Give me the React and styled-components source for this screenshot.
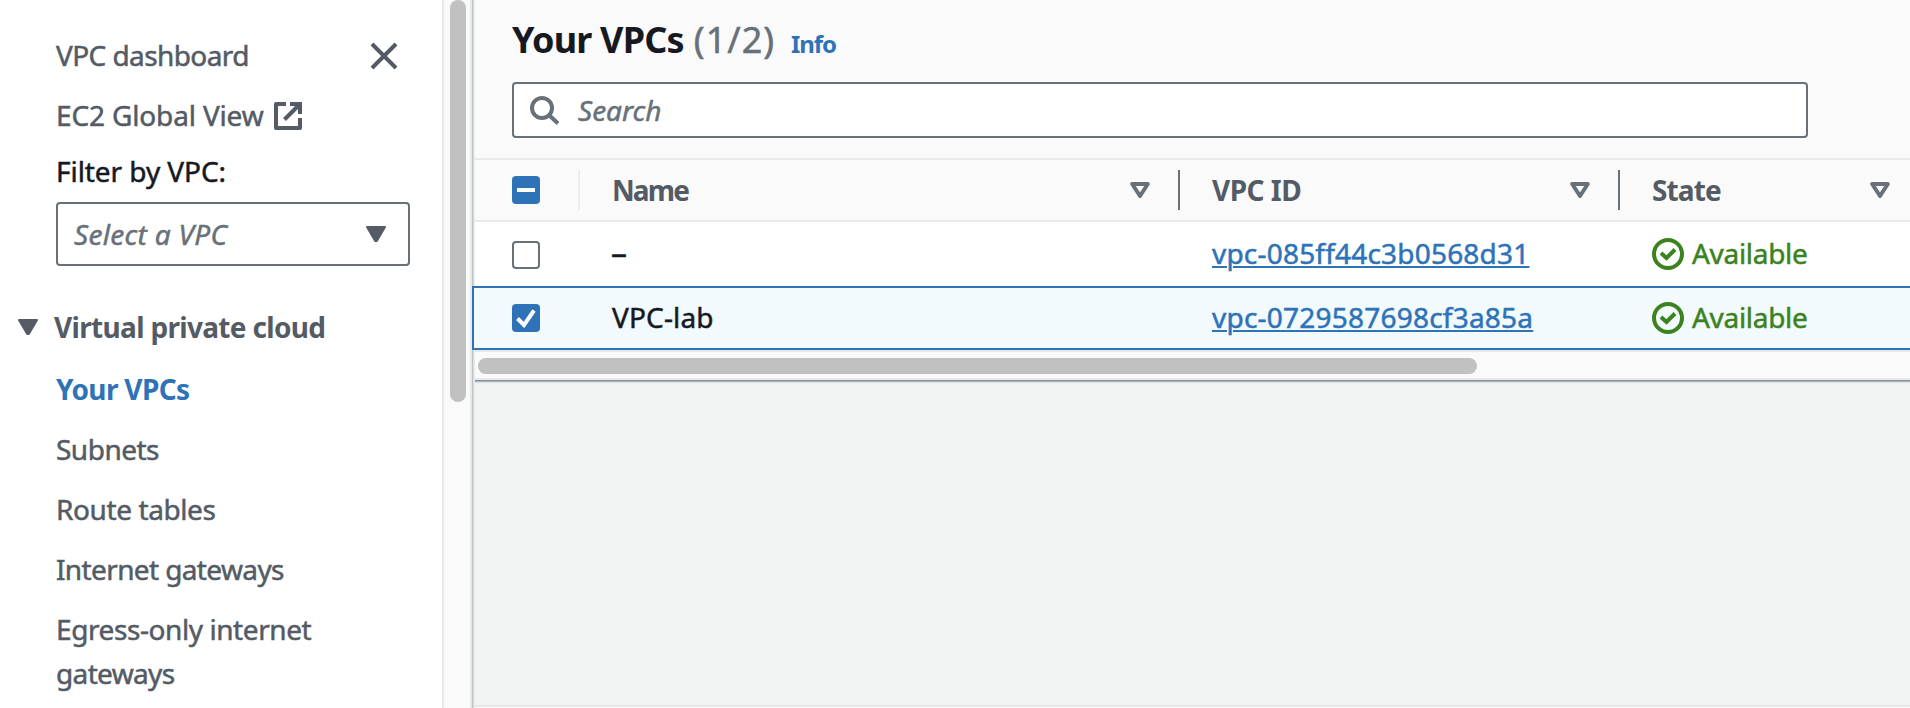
import React from "react";
import styled, { createGlobalStyle } from "styled-components";

const GlobalStyle = createGlobalStyle`
  *, *::before, *::after { box-sizing: border-box; }
  body {
    margin: 0;
    overflow: hidden;
    background: #f2f3f3;
    color: #16191f;
    font: 28px/44px "Noto Sans", "Open Sans", sans-serif;
    -webkit-text-stroke: 0.5px currentColor;
  }
  svg { display: block; flex: none; }
`;

const Page = styled.div`
  display: flex;
  width: 100vw;
  height: 100vh;
  overflow: hidden;
`;

/* Sidebar */
const Sidebar = styled.aside`
  flex: none;
  display: flex;
  width: 472px;
  background: #fff;
`;

const SidebarContent = styled.div`
  flex: 1;
  padding: 33px 32px 0 0;
  overflow: hidden;
`;

const ScrollTrack = styled.div`
  flex: none;
  width: 30px;
  padding-left: 6px;
  background: #fafafa;
  border: solid #e8e8e8;
  border-width: 0 2px;
`;

const ScrollThumb = styled.div`
  width: 16px;
  height: 402px;
  border-radius: 8px;
  background: #c1c1c1;
`;

const Track = styled.span`
  letter-spacing: ${(p) => p.$ls || 0}px;
`;

const NavHeader = styled.div`
  display: flex;
  align-items: center;
  justify-content: space-between;
  height: 44px;
  padding: 0 12px 0 56px;
  color: #545b64;

  svg { margin-top: 2px; }
`;

const NavLink = styled.a`
  display: flex;
  align-items: center;
  gap: 10px;
  margin: 16px 0 0 56px;
  color: ${(p) => (p.$active ? "#2e73b8" : "#545b64")};
  font-weight: ${(p) => (p.$active ? 700 : 400)};
  -webkit-text-stroke-width: ${(p) => (p.$active ? 0 : 0.5)}px;

  svg { margin-top: 2px; }
`;

const FilterLabel = styled.div`
  margin: 12px 0 0 56px;
  height: 44px;
`;

const Select = styled.div`
  display: flex;
  align-items: center;
  justify-content: space-between;
  width: 354px;
  height: 64px;
  margin: 9px 0 0 56px;
  padding: 0 22px 0 16px;
  border: 2px solid #687078;
  border-radius: 4px;
  color: #687078;
  font-style: italic;
`;

const SectionTitle = styled.div`
  display: flex;
  align-items: center;
  gap: 16px;
  margin: 39px 0 18px;
  padding-left: 18px;
  height: 44px;
  color: #545b64;
  font-weight: 700;
  -webkit-text-stroke-width: 0;
`;

/* Main panel */
const Main = styled.main`
  position: relative;
  flex: 1;
  min-width: 0;
  display: flex;
  flex-direction: column;
  overflow: hidden;
  background: #f2f3f3;
`;

const EdgeShadow = styled.div`
  position: absolute;
  left: 0;
  top: ${(p) => p.$top}px;
  bottom: ${(p) => p.$bottom};
  width: 4px;
  background: linear-gradient(90deg, #bcc3c8 0 1px, #dadee1 1px 2px, #e9eced 2px 3px, transparent 3px);
`;

const Panel = styled.section`
  flex: none;
  background: #fafafa;
`;

const PanelHeader = styled.header`
  height: 158px;
  padding: 17px 0 0 40px;
`;

const TitleRow = styled.div`
  display: flex;
  align-items: baseline;
  height: 46px;
  line-height: 46px;
`;

const Title = styled.h1`
  margin: 0;
  font-size: 36px;
  font-weight: 700;
  letter-spacing: -0.8px;
  -webkit-text-stroke-width: 0;
`;

const Count = styled.span`
  margin-left: 10px;
  color: #687078;
  font-size: 36px;
  letter-spacing: 1px;
`;

const Info = styled.a`
  margin-left: 16px;
  color: #2e73b8;
  font-size: 24px;
  font-weight: 700;
  letter-spacing: -1.1px;
  -webkit-text-stroke-width: 0;
`;

const SearchBox = styled.div`
  display: flex;
  align-items: center;
  gap: 18px;
  width: 1296px;
  height: 56px;
  margin-top: 19px;
  padding: 0 16px;
  border: 2px solid #687078;
  border-radius: 4px;
  background: #fff;
  color: #687078;
  font-style: italic;

  svg { margin-top: 2px; }
`;

const Grid = styled.div`
  display: grid;
  grid-template-columns: 108px 600px 440px 300px;
  height: 64px;
`;

const HeaderRow = styled(Grid)`
  border: solid #eaeaea;
  border-width: 2px 0;
  color: #545b64;
  font-weight: 700;
  -webkit-text-stroke-width: 0;
`;

const HeaderCell = styled.div`
  display: flex;
  align-items: center;
  justify-content: space-between;
  height: 40px;
  margin: 10px 0;
  padding: 0 28px 0 32px;
  border-right: 2px solid #687078;
`;

const CheckHeader = styled(HeaderCell)`
  padding: 0 0 0 40px;
  border-right-color: #eaeded;
`;

const Row = styled(Grid)`
  background: #fff;
`;

const SelectedRow = styled(Grid)`
  grid-template-columns: 106px 600px 440px 300px;
  border: 2px solid #2e73b8;
  border-right: 0;
  background: #f2fafe;
`;

const Cell = styled.div`
  display: flex;
  align-items: center;
  gap: 8px;
  padding: 0 0 2px 32px;
  color: ${(p) => (p.$success ? "#3c821f" : "#16191f")};

  svg { margin-top: 2px; }
`;

const Dash = styled.span`
  margin-left: -1px;
  font-size: 32px;
`;

const CheckCell = styled.div`
  display: flex;
  align-items: center;
  padding: ${(p) => (p.$selected ? "0 0 0 38px" : "2px 0 0 40px")};
`;

const Link = styled.a`
  color: #2e73b8;
  text-decoration: underline;
  text-decoration-thickness: 2px;
  text-underline-offset: 2px;
  letter-spacing: ${(p) => p.$ls}px;
`;

const Box = styled.span`
  display: flex;
  align-items: center;
  justify-content: center;
  width: 28px;
  height: 28px;
  border-radius: 4px;
  border: 2px solid ${(p) => (p.$on ? "#2e73b8" : "#687078")};
  background: ${(p) => (p.$on ? "#2e73b8" : "#fff")};
`;

const HScroll = styled.div`
  height: 30px;
  padding: 6px 0 0 6px;
  border: solid #e8e8ea;
  border-width: 2px 0;
`;

const HThumb = styled.div`
  width: 999px;
  height: 16px;
  border-radius: 8px;
  background: #c1c1c1;
`;

const PanelShadow = styled.div`
  flex: none;
  height: 4px;
  background: linear-gradient(#879196 0 1px, #aab3b7 1px 2px, #e1e4e5 2px 3px, #eff1f1 3px);
`;

const BottomEdge = styled.div`
  height: 3px;
  margin-top: auto;
  border-top: 2px solid #e5e6e6;
  background: #fff;
`;

const CloseIcon = () => (
  <svg width="28" height="28" viewBox="0 0 28 28" fill="none" stroke="#545b64" strokeWidth="4">
    <path d="M2 2l24 24M26 2L2 26" />
  </svg>
);

const ExternalIcon = () => (
  <svg width="28" height="28" viewBox="0 0 28 28" fill="none" stroke="#545b64" strokeWidth="4" strokeLinejoin="round">
    <path d="M12 2H2V26H26V16" />
    <path d="M16 2H26V12" strokeLinejoin="miter" />
    <path d="M25 3L10.5 17.5" />
  </svg>
);

const SolidCaret = () => (
  <svg width="20" height="16" viewBox="0 0 20 16" fill="#545b64" stroke="#545b64" strokeWidth="2" strokeLinejoin="round">
    <path d="M1 1H19L10.8 15H9.2Z" />
  </svg>
);

const SortCaret = () => (
  <svg width="20" height="16" viewBox="0 0 20 16" fill="none" stroke="#687078" strokeWidth="4" strokeLinejoin="round">
    <path d="M2.2 2H17.8L10 14Z" />
  </svg>
);

const SearchIcon = () => (
  <svg width="30" height="30" viewBox="0 0 30 30" fill="none" stroke="#687078" strokeWidth="4">
    <circle cx="12" cy="12" r="10" />
    <path d="M19 19l9 8.5" />
  </svg>
);

const MinusIcon = () => (
  <svg width="18" height="4" viewBox="0 0 18 4">
    <rect width="18" height="4" fill="#fff" />
  </svg>
);

const CheckIcon = () => (
  <svg width="20" height="20" viewBox="0 0 20 20" fill="none" stroke="#fff" strokeWidth="4">
    <path d="M1.5 10.5L8 17L18 2.5" />
  </svg>
);

const StatusIcon = () => (
  <svg width="32" height="32" viewBox="0 0 32 32" fill="none" stroke="#3c821f" strokeWidth="4">
    <circle cx="16" cy="16" r="14" />
    <path d="M9 15l5.5 5L23 11.5" />
  </svg>
);

const links = [
  { label: "Your VPCs", ls: -0.65, active: true },
  { label: "Subnets", ls: -0.5 },
  { label: "Route tables", ls: -0.4 },
  { label: "Internet gateways", ls: -0.62 },
];

export default function App() {
  return (
    <Page>
      <GlobalStyle />
      <Sidebar>
        <SidebarContent>
          <NavHeader>
            <Track $ls={-0.58}>VPC dashboard</Track>
            <CloseIcon />
          </NavHeader>
          <NavLink>
            <Track $ls={-0.15}>EC2 Global View</Track>
            <ExternalIcon />
          </NavLink>
          <FilterLabel>
            <Track $ls={-0.06}>Filter by VPC:</Track>
          </FilterLabel>
          <Select>
            <Track $ls={0.3}>Select a VPC</Track>
            <SolidCaret />
          </Select>
          <SectionTitle>
            <SolidCaret />
            <Track $ls={-0.68}>Virtual private cloud</Track>
          </SectionTitle>
          {links.map((l) => (
            <NavLink key={l.label} $active={l.active}>
              <Track $ls={l.ls}>{l.label}</Track>
            </NavLink>
          ))}
          <NavLink>
            <Track $ls={-0.42}>
              Egress-only internet
              <br />
              <Track $ls={-0.65}>gateways</Track>
            </Track>
          </NavLink>
        </SidebarContent>
        <ScrollTrack>
          <ScrollThumb />
        </ScrollTrack>
      </Sidebar>

      <Main>
        <Panel>
          <PanelHeader>
            <TitleRow>
              <Title>Your VPCs</Title>
              <Count>(1/2)</Count>
              <Info>Info</Info>
            </TitleRow>
            <SearchBox>
              <SearchIcon />
              <span>Search</span>
            </SearchBox>
          </PanelHeader>
          <HeaderRow>
            <CheckHeader>
              <Box $on>
                <MinusIcon />
              </Box>
            </CheckHeader>
            <HeaderCell>
              <Track $ls={-1.9}>Name</Track>
              <SortCaret />
            </HeaderCell>
            <HeaderCell>
              <Track $ls={-0.5}>VPC ID</Track>
              <SortCaret />
            </HeaderCell>
            <HeaderCell>
              <Track $ls={-0.9}>State</Track>
              <SortCaret />
            </HeaderCell>
          </HeaderRow>
          <Row>
            <CheckCell>
              <Box />
            </CheckCell>
            <Cell>
              <Dash>–</Dash>
            </Cell>
            <Cell>
              <Link $ls={0.2}>vpc-085ff44c3b0568d31</Link>
            </Cell>
            <Cell $success>
              <StatusIcon />
              <Track $ls={-0.3}>Available</Track>
            </Cell>
          </Row>
          <SelectedRow>
            <CheckCell $selected>
              <Box $on>
                <CheckIcon />
              </Box>
            </CheckCell>
            <Cell>
              <Track $ls={0.15}>VPC-lab</Track>
            </Cell>
            <Cell>
              <Link $ls={0.22}>vpc-0729587698cf3a85a</Link>
            </Cell>
            <Cell $success>
              <StatusIcon />
              <Track $ls={-0.3}>Available</Track>
            </Cell>
          </SelectedRow>
          <HScroll>
            <HThumb />
          </HScroll>
        </Panel>
        <PanelShadow />
        <BottomEdge />
        <EdgeShadow $top={0} $bottom="calc(100% - 286px)" />
        <EdgeShadow $top={350} $bottom="0" />
      </Main>
    </Page>
  );
}
